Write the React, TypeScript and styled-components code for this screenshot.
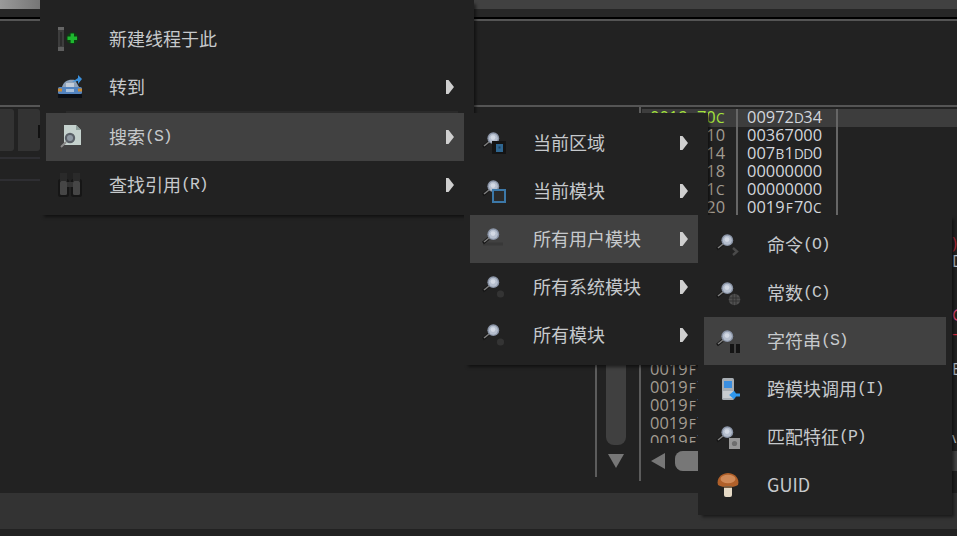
import React from 'react';
import styled, { createGlobalStyle } from 'styled-components';

const GlobalStyle = createGlobalStyle`
  html, body {
    margin: 0;
    padding: 0;
    background: #222222;
  }
`;

const Page = styled.div`
    position: relative;
    width: 957px;
    height: 536px;
    overflow: hidden;
    display: flex;
    flex-direction: column;
    background: #222222;
  `,
  TopStrip = styled.div`
    height: 9px;
    background: #414141;
    display: flex;
  `,
  TopStripTab = styled.div`
    width: 40px;
    background: linear-gradient(90deg, #9a9a9a, #767676);
  `,
  ToolBand = styled.div`
    height: 8px;
    background: #272727;
  `,
  BlackRule = styled.div`
    height: 2px;
    background: #000000;
  `,
  GreyRule = styled.div`
    height: 2px;
    background: #555555;
  `,
  EmptyPane = styled.div`
    height: 84px;
  `,
  Workspace = styled.div`
    height: 386px;
    display: flex;
  `,
  LeftPane = styled.div`
    width: 595px;
    padding-top: 2px;
    box-sizing: border-box;
    display: flex;
    flex-direction: column;
  `,
  TabRow = styled.div`
    height: 42px;
    display: flex;
    gap: 4px;
  `,
  Tab = styled.div<{ $width: number }>`
    position: relative;
    width: ${(props) => props.$width}px;
    background: #333333;
    border-radius: 0 3px 3px 0;
  `,
  Grip = styled.div`
    position: absolute;
    right: 0;
    top: 16px;
    width: 2px;
    height: 13px;
    background: #111111;
  `,
  ThinRule = styled.div<{ $gap: number }>`
    height: 2px;
    margin-top: ${(props) => props.$gap}px;
    background: #2e2e32;
  `,
  Divider = styled.div<{ $top?: number; $bottom: number }>`
    width: 2px;
    margin-top: ${(props) => props.$top || 0}px;
    margin-bottom: ${(props) => props.$bottom}px;
    background: #5c5c5c;
  `,
  ScrollColumn = styled.div`
    width: 42px;
    padding: 12px 0 0 9px;
    box-sizing: border-box;
    display: flex;
    flex-direction: column;
  `,
  ScrollTrack = styled.div`
    width: 20px;
    height: 326px;
    background: #404040;
    border-radius: 0 0 8px 8px;
  `,
  ScrollDown = styled.svg`
    width: 16px;
    height: 14px;
    margin: 9px 0 0 2px;
  `,
  StackPane = styled.div`
    flex: 1;
    min-width: 0;
    padding: 2px 0 0 1px;
    display: flex;
    flex-direction: column;
  `,
  StackRows = styled.div`
    height: 334px;
    overflow: hidden;
    font-family: 'Open Sans', sans-serif;
    font-size: 16.4px;
    font-variant-numeric: tabular-nums;
  `,
  StackRow = styled.div<{ $selected?: boolean }>`
    height: 18px;
    padding-left: 8px;
    display: flex;
    line-height: 16px;
    white-space: nowrap;
    background: ${(props) => (props.$selected ? '#3d3d3d' : 'transparent')};
  `,
  AddressCell = styled.div<{ $current?: boolean }>`
    width: 86px;
    color: ${(props) => (props.$current ? '#a4e23c' : '#a29c92')};
  `,
  DataCell = styled.div`
    width: 89px;
    padding-left: 9px;
    color: #d2d6dc;
    border-left: 2px solid #666666;
    border-right: 2px solid #666666;
  `,
  NoteCell = styled.div<{ $color: string }>`
    flex: 1;
    padding-left: 114px;
    overflow: hidden;
    color: ${(props) => props.$color};
  `,
  HexLetter = styled.span`
    display: inline-block;
    width: 9.4px;
    text-align: center;
    font-size: 13.6px;
  `,
  HScroll = styled.div`
    height: 20px;
    margin-top: 8px;
    padding-left: 9px;
    display: flex;
    align-items: center;
  `,
  ScrollLeft = styled.svg`
    width: 14px;
    height: 16px;
    flex-shrink: 0;
  `,
  HTrack = styled.div`
    flex: 1;
    height: 20px;
    margin-left: 10px;
    background: #444444;
    border-radius: 8px 0 0 8px;
  `,
  HThumb = styled.div`
    width: 120px;
    height: 100%;
    background: #777777;
    border-radius: 8px 0 0 8px;
  `,
  StatusBar = styled.div`
    height: 36px;
    background: #333333;
  `,
  Menu = styled.div<{ $left: number; $top: number; $width: number; $layer: number; $pad?: string }>`
    position: absolute;
    left: ${(props) => props.$left}px;
    top: ${(props) => props.$top}px;
    width: ${(props) => props.$width}px;
    z-index: ${(props) => props.$layer};
    padding: ${(props) => props.$pad || '6px'};
    box-sizing: border-box;
    background: #222222;
    box-shadow: 3px 3px 3px -1px rgba(0, 0, 0, 0.5);
  `,
  MenuRow = styled.div<{ $active?: boolean }>`
    height: 48px;
    padding: 0 10px 0 12px;
    display: flex;
    align-items: center;
    background: ${(props) => (props.$active ? '#414141' : 'transparent')};
  `,
  IconBox = styled.svg`
    width: 24px;
    height: 24px;
    flex-shrink: 0;
    overflow: visible;
    filter: blur(0.6px);
  `,
  Label = styled.div`
    flex: 1;
    margin: 0 0 3px 27px;
    font-family: 'Noto Sans CJK SC', sans-serif;
    font-size: 18px;
    line-height: 24px;
    color: #c6c9cc;
    white-space: nowrap;
    display: flex;
    align-items: center;
  `,
  Hotkey = styled.span`
    margin-top: 3px;
    font-family: 'Liberation Mono', monospace;
    font-size: 16.5px;
    letter-spacing: -1px;
  `,
  SubArrow = styled.svg`
    width: 8px;
    height: 14px;
    flex-shrink: 0;
  `,
  MenuSeparator = styled.div`
    height: 2px;
    margin: 0 6px 0 20px;
    background: #2a2a2a;
  `;

function Lens() {
  return (
    <>
      <line x1="6.5" y1="11.5" x2="1" y2="16" stroke="#161616" strokeWidth="3" />
      <line x1="7" y1="11" x2="2" y2="15" stroke="#7c7c7c" strokeWidth="1.6" />
      <circle cx="11.3" cy="7.2" r="5.9" fill="#8a94a6" />
      <circle cx="11.3" cy="7.2" r="4.5" fill="#b6bfce" />
      <circle cx="11" cy="6.6" r="2.4" fill="#d3d9e4" />
    </>
  );
}

const regionIcon = (
  <IconBox viewBox="0 0 24 24">
    <Lens />
    <rect x="10" y="10" width="14" height="13" fill="#141414" />
    <rect x="14" y="13" width="7" height="8" fill="#2f6690" />
    <rect x="16.5" y="15.5" width="2" height="2" fill="#1d4060" />
  </IconBox>
);
const moduleIcon = (
  <IconBox viewBox="0 0 24 24">
    <Lens />
    <rect x="11" y="11" width="12" height="12" fill="#2a2a2a" stroke="#3c78a8" strokeWidth="2" />
  </IconBox>
);
const userIcon = (
  <IconBox viewBox="0 0 24 24">
    <rect x="1" y="15.5" width="20" height="3" fill="#383838" />
    <Lens />
  </IconBox>
);
const systemIcon = (
  <IconBox viewBox="0 0 24 24">
    <circle cx="18.5" cy="19" r="3.6" fill="#343434" />
    <Lens />
  </IconBox>
);
const commandIcon = (
  <IconBox viewBox="0 0 24 24">
    <Lens />
    <path d="M17 15 L21 18.5 L17 22" fill="none" stroke="#4a4a4a" strokeWidth="2.4" />
  </IconBox>
);
const constantIcon = (
  <IconBox viewBox="0 0 24 24">
    <Lens />
    <circle cx="18.5" cy="18.5" r="5.8" fill="#505050" />
    <path d="M13 17 H24 M13 20 H24 M17 13 V24 M20 13 V24" stroke="#333333" strokeWidth="1" />
  </IconBox>
);
const stringIcon = (
  <IconBox viewBox="0 0 24 24">
    <Lens />
    <rect x="14" y="15" width="4" height="9" fill="#141414" />
    <rect x="20" y="15" width="4" height="9" fill="#141414" />
  </IconBox>
);
const callIcon = (
  <IconBox viewBox="0 0 24 24">
    <rect x="6" y="1" width="12" height="22" rx="1.5" fill="#a8aeb4" />
    <rect x="8" y="4" width="8" height="7" fill="#3a8ee0" />
    <rect x="7" y="14" width="10" height="7" fill="#c8ccd0" />
    <path d="M24 18 H16.5 M19 15 L15.5 18 L19 21" fill="none" stroke="#2f98ee" strokeWidth="3" />
  </IconBox>
);
const patternIcon = (
  <IconBox viewBox="0 0 24 24">
    <Lens />
    <rect x="13" y="13" width="11" height="11" fill="#989898" />
    <circle cx="18.5" cy="18.5" r="2.6" fill="#6e6e6e" />
  </IconBox>
);
const guidIcon = (
  <IconBox viewBox="0 0 24 24">
    <path d="M2 12 C0 5 6 0 12 0 C18 0 24 5 22 12 C17 15 7 15 2 12 Z" fill="#b0602a" />
    <ellipse cx="12" cy="6" rx="7.5" ry="4.2" fill="#d08a58" />
    <rect x="8" y="13" width="8" height="11" rx="2" fill="#e6dac6" />
    <rect x="8" y="13" width="8" height="2" fill="#7d5f42" />
  </IconBox>
);
const threadIcon = (
  <IconBox viewBox="0 0 24 24">
    <rect x="0" y="0" width="6" height="24" fill="#3d3d3d" />
    <rect x="2" y="5" width="2" height="14" fill="#2c2c2c" />
    <rect x="0" y="0" width="6" height="3" fill="#666666" />
    <rect x="0" y="20" width="6" height="4" fill="#5e5e5e" />
    <circle cx="14.3" cy="11.3" r="6" fill="#0f3d14" />
    <path d="M14.3 6.5 V16 M9.5 11.3 H19" stroke="#1eb82f" strokeWidth="3.4" />
  </IconBox>
);
const gotoIcon = (
  <IconBox viewBox="0 0 24 24">
    <path d="M4 12 C6 6 10 4 17 5 L21 12 Z" fill="#8ea2ba" />
    <rect x="8" y="8" width="8" height="4" fill="#c2ccd8" />
    <rect x="0" y="12" width="24" height="7" rx="1.5" fill="#5384c0" />
    <rect x="0" y="13.5" width="4" height="3" fill="#c98a34" />
    <rect x="20" y="13.5" width="4" height="3" fill="#c98a34" />
    <rect x="8" y="14" width="8" height="3" fill="#a8c0dc" />
    <rect x="0" y="19" width="24" height="4" fill="#0b0f16" />
    <path d="M14 7 L20 3 V0 L24 4 L20 9 V6 Z" fill="#3a90dc" />
  </IconBox>
);
const searchIcon = (
  <IconBox viewBox="0 0 24 24">
    <path d="M6 0 H18 L23 5 V20 H6 Z" fill="#c5d2ce" />
    <path d="M18 0 L23 5 H18 Z" fill="#8fa09c" />
    <line x1="8" y1="17" x2="3" y2="22" stroke="#8a8a8a" strokeWidth="2" />
    <circle cx="12" cy="13" r="5.2" fill="#5a6068" />
    <circle cx="12" cy="13" r="3" fill="#8e98a2" />
  </IconBox>
);
const findIcon = (
  <IconBox viewBox="0 0 24 24">
    <rect x="0" y="6" width="11" height="18" rx="2.5" fill="#161616" />
    <rect x="13" y="6" width="11" height="18" rx="2.5" fill="#161616" />
    <rect x="2" y="0" width="7" height="8" fill="#2a2a2a" />
    <rect x="15" y="0" width="7" height="8" fill="#2a2a2a" />
    <rect x="2" y="8" width="7" height="14" rx="1.5" fill="#464646" />
    <rect x="15" y="8" width="7" height="14" rx="1.5" fill="#464646" />
    <rect x="9" y="9" width="6" height="5" fill="#343434" />
  </IconBox>
);

function Arrow() {
  return (
    <SubArrow viewBox="0 0 8 14">
      <path d="M0 0 H2.5 L8 7 L2.5 14 H0 Z" fill="#cfcfcf" />
    </SubArrow>
  );
}

interface ItemProps {
  icon: JSX.Element;
  text: string;
  hotkey?: string;
  active?: boolean;
  more?: boolean;
}

function Item({ icon, text, hotkey, active, more }: ItemProps): JSX.Element {
  return (
    <MenuRow $active={active}>
      {icon}
      <Label>
        {text}
        {hotkey && <Hotkey>{hotkey}</Hotkey>}
      </Label>
      {more && <Arrow />}
    </MenuRow>
  );
}

// hex letters are drawn smaller than the digits, in a digit-wide cell
function Hex({ value }: { value: string }): JSX.Element {
  return (
    <>
      {value.split('').map((ch, i) =>
        /[A-F]/.test(ch) ? <HexLetter key={i}>{ch}</HexLetter> : ch
      )}
    </>
  );
}

const stackRows = [
  ['0019F70C', '00972D34', ''],
  ['0019F710', '00367000', ''],
  ['0019F714', '007B1DD0', ''],
  ['0019F718', '00000000', ''],
  ['0019F71C', '00000000', ''],
  ['0019F720', '0019F70C', ''],
  ['0019F724', '00000000', ''],
  ['0019F728', '00000000', ')|#b02838'],
  ['0019F72C', '00000000', 'D|#b8c4d0'],
  ['0019F730', '00000000', ''],
  ['0019F734', '00000000', ''],
  ['0019F738', '00000000', 'G|#e0487c'],
  ['0019F73C', '00000000', '-|#e0304c'],
  ['0019F740', '00000000', ''],
  ['0019F744', '00000000', 'E|#b8c4d0'],
  ['0019F748', '00000000', ''],
  ['0019F74C', '00000000', ''],
  ['0019F750', '00000000', ''],
  ['0019F754', '00000000', 'V|#b8c4d0'],
];

export default function App(): JSX.Element {
  return (
    <Page>
      <GlobalStyle />
      <TopStrip>
        <TopStripTab />
      </TopStrip>
      <ToolBand />
      <BlackRule />
      <GreyRule />
      <EmptyPane />
      <GreyRule />
      <Workspace>
        <LeftPane>
          <TabRow>
            <Tab $width={14} />
            <Tab $width={22}>
              <Grip />
            </Tab>
          </TabRow>
          <ThinRule $gap={6} />
          <ThinRule $gap={20} />
        </LeftPane>
        <Divider $top={8} $bottom={16} />
        <ScrollColumn>
          <ScrollTrack />
          <ScrollDown viewBox="0 0 16 14">
            <path d="M0 0 H16 L8 14 Z" fill="#777777" />
          </ScrollDown>
        </ScrollColumn>
        <Divider $bottom={12} />
        <StackPane>
          <StackRows>
            {stackRows.map(([address, data, note], i) => {
              const [noteText, noteColor] = note.split('|');
              return (
                <StackRow key={address} $selected={i === 0}>
                  <AddressCell $current={i === 0}>
                    <Hex value={address} />
                  </AddressCell>
                  <DataCell>
                    <Hex value={data} />
                  </DataCell>
                  <NoteCell $color={noteColor || '#cccccc'}>{noteText}</NoteCell>
                </StackRow>
              );
            })}
          </StackRows>
          <HScroll>
            <ScrollLeft viewBox="0 0 14 16">
              <path d="M14 0 V16 L0 8 Z" fill="#777777" />
            </ScrollLeft>
            <HTrack>
              <HThumb />
            </HTrack>
          </HScroll>
        </StackPane>
      </Workspace>
      <StatusBar />

      <Menu $left={40} $top={0} $width={434} $layer={1} $pad="15px 10px 6px 6px">
        <Item icon={threadIcon} text="新建线程于此" />
        <Item icon={gotoIcon} text="转到" more />
        <MenuSeparator />
        <Item icon={searchIcon} text="搜索" hotkey="(S)" active more />
        <Item icon={findIcon} text="查找引用" hotkey="(R)" more />
      </Menu>
      <Menu $left={464} $top={113} $width={244} $layer={2} $pad="6px 10px 6px 6px">
        <Item icon={regionIcon} text="当前区域" more />
        <Item icon={moduleIcon} text="当前模块" more />
        <Item icon={userIcon} text="所有用户模块" active more />
        <Item icon={systemIcon} text="所有系统模块" more />
        <Item icon={systemIcon} text="所有模块" more />
      </Menu>
      <Menu $left={698} $top={215} $width={254} $layer={3}>
        <Item icon={commandIcon} text="命令" hotkey="(O)" />
        <Item icon={constantIcon} text="常数" hotkey="(C)" />
        <Item icon={stringIcon} text="字符串" hotkey="(S)" active />
        <Item icon={callIcon} text="跨模块调用" hotkey="(I)" />
        <Item icon={patternIcon} text="匹配特征" hotkey="(P)" />
        <Item icon={guidIcon} text="GUID" />
      </Menu>
    </Page>
  );
}
